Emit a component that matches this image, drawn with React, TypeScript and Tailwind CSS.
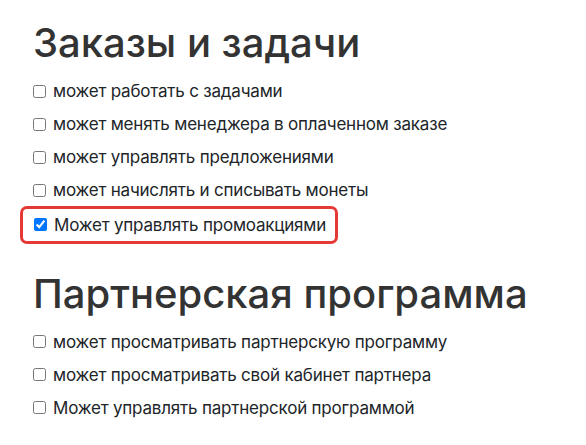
import { useState } from "react";

type Perm = { id: string; label: string; checked?: boolean };

const orders: Perm[] = [
  { id: "tasks", label: "может работать с задачами" },
  { id: "manager", label: "может менять менеджера в оплаченном заказе" },
  { id: "offers", label: "может управлять предложениями" },
  { id: "coins", label: "может начислять и списывать монеты" },
  { id: "promo", label: "Может управлять промоакциями", checked: true },
];

const partners: Perm[] = [
  { id: "p-view", label: "может просматривать партнерскую программу" },
  { id: "p-cabinet", label: "может просматривать свой кабинет партнера" },
  { id: "p-manage", label: "Может управлять партнерской программой" },
];

const PermRow = ({ perm, value, onToggle }: { perm: Perm; value: boolean; onToggle: () => void }) => {
  const box = (
    <label className="flex items-center h-[33px] text-[17px] leading-6 tracking-[-0.2px] text-[#212529] cursor-pointer">
      <input
        type="checkbox"
        checked={value}
        onChange={onToggle}
        className="w-[13px] h-[13px] mr-[7px] accent-[#0075ff]"
      />
      {perm.label}
    </label>
  );

  // the promo permission is outlined in red
  if (perm.checked) {
    return (
      <div className="-ml-[13px] mt-[-1px] w-[318px] h-[38px] border-[3px] border-[#e53935] rounded-[7px] pl-[11px] flex items-center">
        {box}
      </div>
    );
  }
  return box;
};

const Section = ({ title, perms, state, toggle, className }: {
  title: string;
  perms: Perm[];
  state: Record<string, boolean>;
  toggle: (id: string) => void;
  className?: string;
}) => (
  <section className={className}>
    <h2 className="text-[40px] leading-[48px] font-medium text-[#333333]">{title}</h2>
    <div className="flex flex-col">
      {perms.map((p) => (
        <PermRow key={p.id} perm={p} value={state[p.id]} onToggle={() => toggle(p.id)} />
      ))}
    </div>
  </section>
);

export default function App() {
  const [state, setState] = useState<Record<string, boolean>>(() =>
    Object.fromEntries([...orders, ...partners].map((p) => [p.id, !!p.checked]))
  );
  const toggle = (id: string) => setState((s) => ({ ...s, [id]: !s[id] }));

  return (
    <div className="w-[586px] h-[445px] bg-white pl-[33px] pt-[19px] overflow-hidden font-['Inter',sans-serif]">
      <Section title="Заказы и задачи" perms={orders} state={state} toggle={toggle} className="[&>div]:mt-[7.5px]" />
      <Section title="Партнерская программа" perms={partners} state={state} toggle={toggle} className="mt-[26px] [&>div]:mt-[7.5px]" />
    </div>
  );
}
